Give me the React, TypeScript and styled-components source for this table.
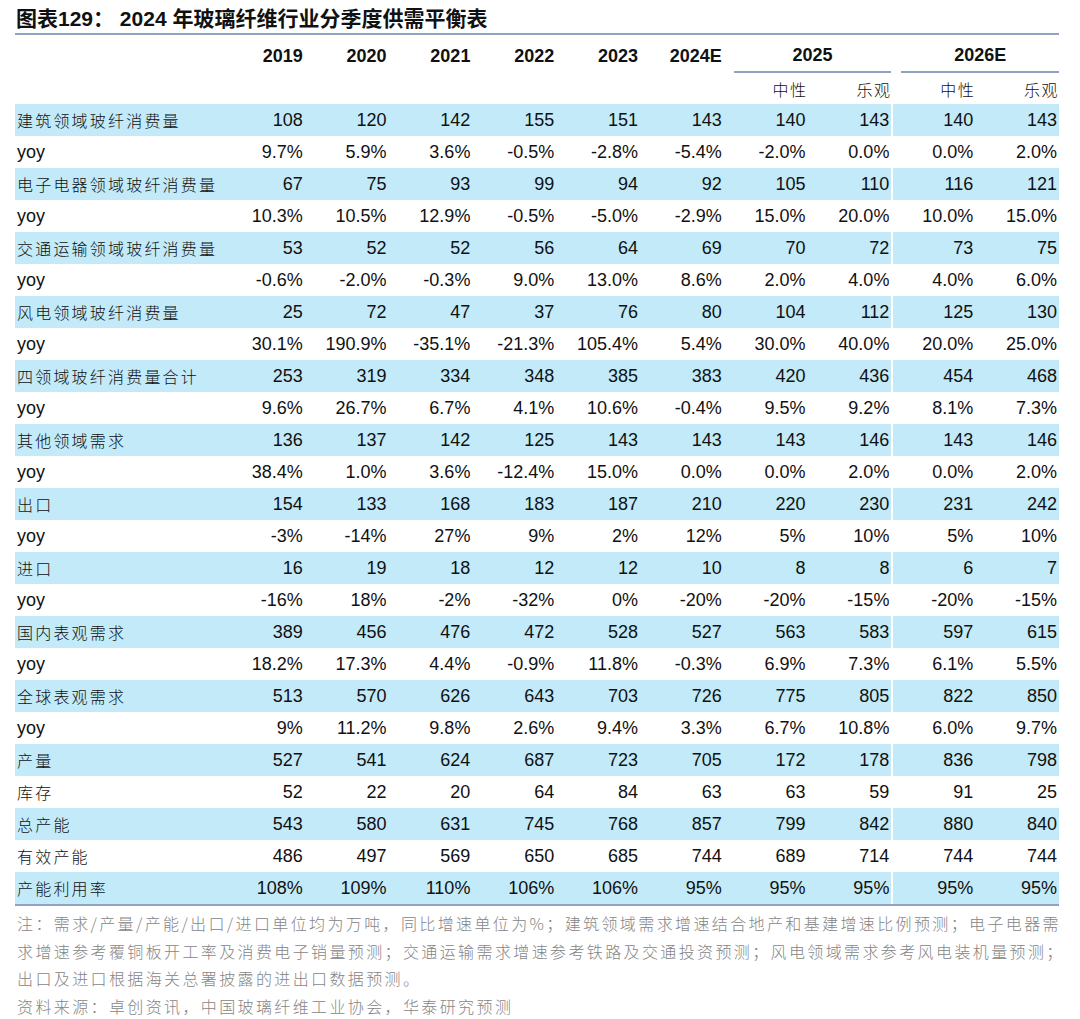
import styled, { createGlobalStyle } from 'styled-components'
import { FunctionComponent } from 'react'

const GlobalStyle = createGlobalStyle`
  html, body {
    margin: 0;
    padding: 0;
    background: #ffffff;
  }
`

const Page = styled('div')`
  width: 1080px;
  padding: 0 0 0 15px;
  box-sizing: border-box;
  font-family: "Liberation Sans", "Noto Sans CJK SC", sans-serif;
  color: #111111;
`

const Title = styled('div')`
  width: 1044px;
  height: 35px;
  box-sizing: border-box;
  padding: 7px 0 0 1px;
  font-size: 21px;
  font-weight: 700;
  line-height: 24px;
  white-space: nowrap;
  border-bottom: 2px solid #8fa3c2;
`

const Grid = styled('div')<{ $height: number; $shade?: boolean }>`
  width: 1044px;
  height: ${p => p.$height}px;
  display: grid;
  grid-template-columns: 206px repeat(10, 1fr);
  background: ${p => (p.$shade ? '#c3eaf8' : 'transparent')};
`

const YearCell = styled('div')`
  display: flex;
  align-items: center;
  justify-content: flex-end;
  padding: 4px 2px 0 0;
  font-size: 18px;
  font-weight: 700;
`

const GroupCell = styled('div')`
  grid-column: span 2;
  display: flex;
  align-items: center;
  justify-content: center;
  margin: 0 0 0 10px;
  padding: 4px 0 0 0;
  font-size: 18px;
  font-weight: 700;
  border-bottom: 2px solid #8fa3c2;
`

const SubCell = styled('div')`
  display: flex;
  align-items: center;
  justify-content: flex-end;
  font-family: "Noto Sans CJK SC", sans-serif;
  font-weight: 300;
  font-size: 16px;
  letter-spacing: 1.5px;
`

const Label = styled('div')<{ $latin?: boolean }>`
  display: flex;
  align-items: center;
  padding-left: 2px;
  white-space: nowrap;
  font-size: ${p => (p.$latin ? '18px' : '16px')};
  font-weight: ${p => (p.$latin ? 400 : 300)};
  letter-spacing: ${p => (p.$latin ? '0' : '2.2px')};
  font-family: ${p => (p.$latin ? '"Liberation Sans", sans-serif' : '"Noto Sans CJK SC", sans-serif')};
`

const Num = styled('div')<{ $split?: boolean; $shade?: boolean }>`
  display: flex;
  align-items: center;
  justify-content: flex-end;
  padding-right: 2px;
  font-size: 18px;
  white-space: nowrap;
  border-left: ${p => (p.$split && p.$shade ? '2px solid #ffffff' : 'none')};
`

const Body = styled('div')`
  border-bottom: 2px solid #8fa3c2;
  width: 1044px;
`

const Notes = styled('div')`
  padding: 4px 0 0 2px;
  font-family: "Noto Sans CJK SC", sans-serif;
  font-weight: 300;
  font-size: 16px;
  letter-spacing: 2.38px;
  line-height: 27.5px;
  color: #858585;
  white-space: nowrap;
`

// End styled components ------------------------------

type Row = (string | number)[]

const rows: Row[] = [
  ['建筑领域玻纤消费量', 108, 120, 142, 155, 151, 143, 140, 143, 140, 143],
  ['yoy', '9.7%', '5.9%', '3.6%', '-0.5%', '-2.8%', '-5.4%', '-2.0%', '0.0%', '0.0%', '2.0%'],
  ['电子电器领域玻纤消费量', 67, 75, 93, 99, 94, 92, 105, 110, 116, 121],
  ['yoy', '10.3%', '10.5%', '12.9%', '-0.5%', '-5.0%', '-2.9%', '15.0%', '20.0%', '10.0%', '15.0%'],
  ['交通运输领域玻纤消费量', 53, 52, 52, 56, 64, 69, 70, 72, 73, 75],
  ['yoy', '-0.6%', '-2.0%', '-0.3%', '9.0%', '13.0%', '8.6%', '2.0%', '4.0%', '4.0%', '6.0%'],
  ['风电领域玻纤消费量', 25, 72, 47, 37, 76, 80, 104, 112, 125, 130],
  ['yoy', '30.1%', '190.9%', '-35.1%', '-21.3%', '105.4%', '5.4%', '30.0%', '40.0%', '20.0%', '25.0%'],
  ['四领域玻纤消费量合计', 253, 319, 334, 348, 385, 383, 420, 436, 454, 468],
  ['yoy', '9.6%', '26.7%', '6.7%', '4.1%', '10.6%', '-0.4%', '9.5%', '9.2%', '8.1%', '7.3%'],
  ['其他领域需求', 136, 137, 142, 125, 143, 143, 143, 146, 143, 146],
  ['yoy', '38.4%', '1.0%', '3.6%', '-12.4%', '15.0%', '0.0%', '0.0%', '2.0%', '0.0%', '2.0%'],
  ['出口', 154, 133, 168, 183, 187, 210, 220, 230, 231, 242],
  ['yoy', '-3%', '-14%', '27%', '9%', '2%', '12%', '5%', '10%', '5%', '10%'],
  ['进口', 16, 19, 18, 12, 12, 10, 8, 8, 6, 7],
  ['yoy', '-16%', '18%', '-2%', '-32%', '0%', '-20%', '-20%', '-15%', '-20%', '-15%'],
  ['国内表观需求', 389, 456, 476, 472, 528, 527, 563, 583, 597, 615],
  ['yoy', '18.2%', '17.3%', '4.4%', '-0.9%', '11.8%', '-0.3%', '6.9%', '7.3%', '6.1%', '5.5%'],
  ['全球表观需求', 513, 570, 626, 643, 703, 726, 775, 805, 822, 850],
  ['yoy', '9%', '11.2%', '9.8%', '2.6%', '9.4%', '3.3%', '6.7%', '10.8%', '6.0%', '9.7%'],
  ['产量', 527, 541, 624, 687, 723, 705, 172, 178, 836, 798],
  ['库存', 52, 22, 20, 64, 84, 63, 63, 59, 91, 25],
  ['总产能', 543, 580, 631, 745, 768, 857, 799, 842, 880, 840],
  ['有效产能', 486, 497, 569, 650, 685, 744, 689, 714, 744, 744],
  ['产能利用率', '108%', '109%', '110%', '106%', '106%', '95%', '95%', '95%', '95%', '95%'],
]

const years = ['2019', '2020', '2021', '2022', '2023', '2024E']

const notes = [
  '注：需求/产量/产能/出口/进口单位均为万吨，同比增速单位为%；建筑领域需求增速结合地产和基建增速比例预测；电子电器需',
  '求增速参考覆铜板开工率及消费电子销量预测；交通运输需求增速参考铁路及交通投资预测；风电领域需求参考风电装机量预测；',
  '出口及进口根据海关总署披露的进出口数据预测。',
  '资料来源：卓创资讯，中国玻璃纤维工业协会，华泰研究预测',
]

const App: FunctionComponent = () => {
  return (
    <Page>
      <GlobalStyle />
      <Title>图表129： 2024 年玻璃纤维行业分季度供需平衡表</Title>
      <Grid $height={38}>
        <div />
        {years.map(y => <YearCell key={y}>{y}</YearCell>)}
        <GroupCell>2025</GroupCell>
        <GroupCell>2026E</GroupCell>
      </Grid>
      <Grid $height={31}>
        <div />
        {years.map(y => <div key={y} />)}
        <SubCell>中性</SubCell>
        <SubCell>乐观</SubCell>
        <SubCell>中性</SubCell>
        <SubCell>乐观</SubCell>
      </Grid>
      <Body>
        {rows.map((row, i) => {
          const shade = i % 2 === 0
          const [label, ...vals] = row
          return (
            <Grid key={i} $height={32} $shade={shade}>
              <Label $latin={label === 'yoy'}>{label}</Label>
              {vals.map((v, j) => (
                <Num key={j} $split={j === 8} $shade={shade}>{v}</Num>
              ))}
            </Grid>
          )
        })}
      </Body>
      <Notes>
        {notes.map(n => <div key={n}>{n}</div>)}
      </Notes>
    </Page>
  )
}

export default App
